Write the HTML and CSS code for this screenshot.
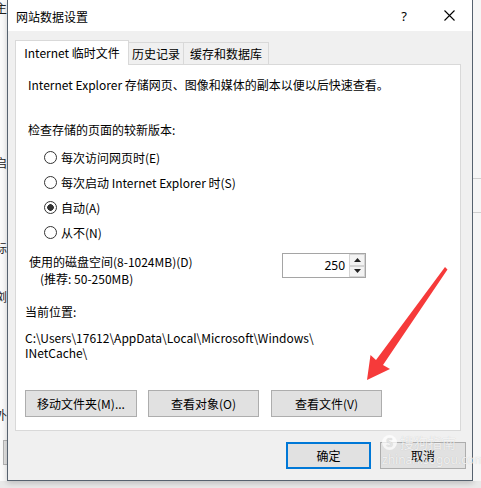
FILE: index.html
```html
<!DOCTYPE html>
<html lang="zh-CN">
<head>
  <meta charset="UTF-8" />
  <title>网站数据设置</title>
  <link rel="stylesheet" href="styles.css">
</head>
<body>
  <div class="screen">
    <div class="behind-left">
      <div class="bl-char bl-1">主</div>
      <div class="bl-char bl-2">启</div>
      <div class="bl-char bl-3">标</div>
      <div class="bl-char bl-4">浏</div>
      <div class="bl-char bl-5">外</div>
      <div class="bl-btn"></div>
    </div>

    <div class="dialog">
      <div class="titlebar">
        <span class="title">网站数据设置</span>
        <span class="help">?</span>
        <span class="close">
          <svg width="11" height="11" viewBox="0 0 11 11"><path d="M0.5 0.5L10.5 10.5M10.5 0.5L0.5 10.5" stroke="#000" stroke-width="1.1" fill="none"/></svg>
        </span>
      </div>

      <div class="body">
        <div class="tabs">
          <div class="tab active">Internet 临时文件</div>
          <div class="tab tab-history">历史记录</div>
          <div class="tab tab-cache">缓存和数据库</div>
        </div>

        <div class="panel">
          <p class="intro">Internet Explorer 存储网页、图像和媒体的副本以便以后快速查看。</p>
          <p class="label">检查存储的页面的较新版本:</p>
          <div class="radios">
            <div class="radio"><span class="dot"></span>每次访问网页时(E)</div>
            <div class="radio"><span class="dot"></span>每次启动 Internet Explorer 时(S)</div>
            <div class="radio"><span class="dot checked"></span>自动(A)</div>
            <div class="radio"><span class="dot"></span>从不(N)</div>
          </div>

          <div class="disk">
            <div class="disk-text">
              <div>使用的磁盘空间(8-1024MB)(D)</div>
              <div class="disk-sub">(推荐: 50-250MB)</div>
            </div>
            <div class="spin">
              <span class="spin-value">250</span>
              <span class="spin-btns">
                <span class="spin-btn"><svg width="7" height="4" viewBox="0 0 7 4"><path d="M0 4L3.5 0L7 4Z" fill="#222"/></svg></span>
                <span class="spin-btn"><svg width="7" height="4" viewBox="0 0 7 4"><path d="M0 0L3.5 4L7 0Z" fill="#222"/></svg></span>
              </span>
            </div>
          </div>

          <p class="loc-label">当前位置:</p>
          <p class="path">C:\Users\17612\AppData\Local\Microsoft\Windows\<br>INetCache\</p>

          <div class="btnrow">
            <button class="btn btn-move">移动文件夹(M)...</button>
            <button class="btn btn-obj">查看对象(O)</button>
            <button class="btn btn-files">查看文件(V)</button>
          </div>
        </div>

        <div class="footer">
          <button class="btn btn-ok">确定</button>
          <button class="btn btn-cancel">取消</button>
        </div>
      </div>
    </div>

    <div class="behind-right">
      <div class="br-line br-1"></div>
      <div class="br-line br-2"></div>
    </div>
  </div>

  <div class="watermark">
    <div class="wm-top"><span class="wm-s">S</span>搜狗指南</div>
    <div class="wm-url">zhinan.sogou.com</div>
  </div>

  <svg class="arrow" width="481" height="488" viewBox="0 0 481 488">
    <path d="M445 267L447.5 269.5L383 365L390 369L367 380L370.5 355L376 360Z" fill="#f63a3a"/>
  </svg>
</body>
</html>
```

FILE: styles.css
```css
* {
  box-sizing: border-box;
}

html, body {
  margin: 0;
}

body {
  width: 481px;
  height: 488px;
  overflow: hidden;
  position: relative;
  background: #e9e9e9;
  font-family: "Noto Sans CJK SC", "Noto Sans", sans-serif;
  font-size: 12px;
  color: #000;
}

p {
  margin: 0;
}

.screen {
  display: flex;
  height: 488px;
  align-items: flex-start;
}

/* window behind the dialog */
.behind-left {
  width: 7px;
  height: 481px;
  overflow: hidden;
  background: #fafafa;
}

.bl-char {
  margin-left: -5px;
  line-height: 16px;
  color: #222;
}

.bl-2 { margin-top: 139px; }
.bl-3 { margin-top: 69px; }
.bl-4 { margin-top: 33px; }
.bl-5 { margin-top: 102px; }

.bl-btn {
  margin-top: 17px;
  margin-left: 3px;
  width: 6px;
  height: 25px;
  background: #e1e1e1;
  border: 1px solid #b4b4b4;
}

.behind-right {
  width: 8px;
  height: 481px;
  background: #f6f6f6;
}

.br-line {
  height: 1px;
  background: #cfcfcf;
}

.br-1 { margin-top: 178px; }
.br-2 { margin-top: 33px; }

/* dialog */
.dialog {
  width: 466px;
  height: 481px;
  background: #f0f0f0;
  border: 1px solid #56626f;
  border-top: 0;
  display: flex;
  flex-direction: column;
  box-shadow: 0 2px 6px rgba(0,0,0,0.2);
}

.titlebar {
  height: 31px;
  flex-shrink: 0;
  background: #fff;
  display: flex;
  align-items: center;
  padding-left: 8px;
}

.title {
  flex: 1;
  padding-top: 1px;
}

.help {
  width: 44px;
  text-align: center;
  font-size: 13px;
  font-family: "Noto Sans", sans-serif;
}

.close {
  width: 46px;
  display: flex;
  justify-content: center;
  align-items: center;
}

.body {
  padding: 9px 6px 0 7px;
}

.tabs {
  display: flex;
  align-items: flex-end;
  height: 24px;
}

.tab {
  height: 22px;
  line-height: 21px;
  text-align: center;
  background: #f0f0f0;
  border: 1px solid #d9d9d9;
  border-bottom: 0;
  margin-left: -1px;
}

.tab.active {
  height: 25px;
  line-height: 24px;
  width: 114px;
  margin-left: 0;
  margin-bottom: -1px;
  background: #fff;
  position: relative;
  z-index: 1;
}

.tab-history { width: 56px; }
.tab-cache { width: 86px; }

.panel {
  width: 446px;
  height: 367px;
  background: #fff;
  border: 1px solid #d9d9d9;
  padding-top: 12px;
  line-height: 16px;
}

.intro {
  margin-left: 12px;
}

.label {
  margin-top: 29px;
  margin-left: 12px;
}

.radios {
  margin-top: 7px;
}

.radio {
  height: 25px;
  display: flex;
  align-items: center;
  padding-left: 28px;
}

.dot {
  width: 13px;
  height: 13px;
  border: 1px solid #333;
  border-radius: 50%;
  background: #fff;
  margin-right: 4px;
}

.dot.checked {
  background: radial-gradient(circle, #333 0 3px, #fff 3.6px);
}

.disk {
  margin-top: 8px;
  display: flex;
  line-height: 17px;
}

.disk-text {
  width: 266px;
  padding-left: 13px;
}

.disk-sub {
  padding-left: 11px;
}

.spin {
  width: 84px;
  height: 25px;
  border: 1px solid #a5a5a5;
  display: flex;
  align-items: center;
  justify-content: flex-end;
}

.spin-value {
  line-height: 16px;
  margin-right: 4px;
  font-family: "Noto Sans", sans-serif;
}

.spin-btns {
  display: flex;
  flex-direction: column;
  width: 16px;
  height: 23px;
  border-left: 1px solid #cfcfcf;
}

.spin-btn {
  flex: 1;
  display: flex;
  align-items: center;
  justify-content: center;
  background: #f3f3f3;
  border: 1px solid #d4d4d4;
  margin: 0 0 0 -1px;
}

.loc-label {
  margin-top: 17px;
  margin-left: 9px;
}

.path {
  margin-top: 10px;
  margin-left: 9px;
  line-height: 15px;
}

.btnrow {
  margin-top: 30px;
  margin-left: 9px;
  display: flex;
}

.btn {
  height: 27px;
  padding: 0;
  font-family: inherit;
  font-size: 12px;
  color: #000;
  background: #e1e1e1;
  border: 1px solid #adadad;
}

.btn-move { width: 112px; }
.btn-obj { width: 111px; margin-left: 11px; }
.btn-files { width: 111px; margin-left: 12px; }

.footer {
  margin-top: 11px;
  display: flex;
  justify-content: flex-end;
}

.btn-ok {
  width: 85px;
  border: 2px solid #0078d7;
}

.btn-cancel {
  width: 86px;
  margin-left: 9px;
}

/* overlays */
.watermark {
  position: absolute;
  left: 382px;
  top: 434px;
  color: rgba(255,255,255,0.75);
  text-shadow: 0 0 1px rgba(0,0,0,0.18);
  line-height: 16px;
}

.wm-top {
  font-size: 14px;
  display: flex;
  align-items: center;
  gap: 3px;
}

.wm-s {
  width: 15px;
  height: 15px;
  border-radius: 50%;
  background: rgba(255,255,255,0.7);
  color: #e4e4e4;
  font-size: 11px;
  font-weight: bold;
  display: flex;
  align-items: center;
  justify-content: center;
}

.wm-url {
  font-size: 12px;
  margin-top: 2px;
  font-family: "Noto Sans", sans-serif;
}

.arrow {
  position: absolute;
  left: 0;
  top: 0;
  pointer-events: none;
}
```
